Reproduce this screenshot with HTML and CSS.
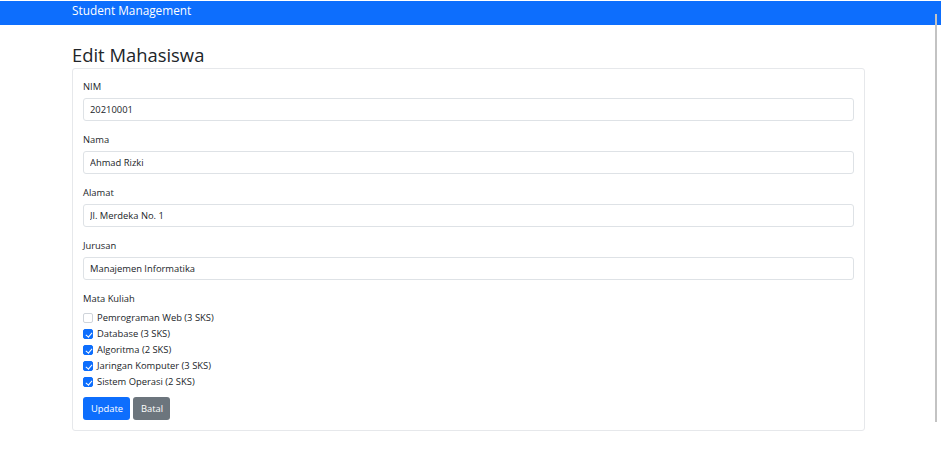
FILE: index.html
```html
<!DOCTYPE html>
<html lang="id">
<head>
<meta charset="utf-8">
<title>Edit Mahasiswa</title>
<link rel="stylesheet" href="styles.css">
</head>
<body>
<nav class="navbar"><div class="container"><span class="brand">Student Management</span></div></nav>
<main class="container">
  <h1 class="title">Edit Mahasiswa</h1>
  <form class="card">
    <div class="group">
      <label class="label">NIM</label>
      <input class="input" type="text" value="20210001">
    </div>
    <div class="group">
      <label class="label">Nama</label>
      <input class="input" type="text" value="Ahmad Rizki">
    </div>
    <div class="group">
      <label class="label">Alamat</label>
      <input class="input" type="text" value="Jl. Merdeka No. 1">
    </div>
    <div class="group">
      <label class="label">Jurusan</label>
      <input class="input" type="text" value="Manajemen Informatika">
    </div>
    <div class="group">
      <label class="label">Mata Kuliah</label>
      <div class="checks">
        <label class="check"><span class="box"></span>Pemrograman Web (3 SKS)</label>
        <label class="check"><span class="box on"></span>Database (3 SKS)</label>
        <label class="check"><span class="box on"></span>Algoritma (2 SKS)</label>
        <label class="check"><span class="box on"></span>Jaringan Komputer (3 SKS)</label>
        <label class="check"><span class="box on"></span>Sistem Operasi (2 SKS)</label>
      </div>
    </div>
    <div class="actions">
      <button type="button" class="btn btn-primary">Update</button>
      <button type="button" class="btn btn-secondary">Batal</button>
    </div>
  </form>
</main>
<div class="scrollbar"></div>
</body>
</html>
```
FILE: styles.css
```css
* { box-sizing: border-box; }
html, body { margin: 0; padding: 0; background: #fff; }
body {
  font-family: "Open Sans", "Noto Sans", "Liberation Sans", sans-serif;
  color: #212529;
  font-size: 9.4px;
  position: relative;
  min-height: 454px;
}
.container { margin-left: 72px; width: 793px; }
.navbar {
  margin-top: 1px;
  height: 24px;
  background: #0d6efd;
  display: flex;
  align-items: center;
}
.brand { color: #fff; font-size: 11.8px; line-height: 16px; position: relative; top: -3px; }
.title {
  margin: 16px 0 0;
  font-size: 18.4px;
  font-weight: 400;
  line-height: 27px;
  color: #212529;
}
.card {
  border: 1px solid #e6e8eb;
  border-radius: 3px;
  padding: 10px 10px 10px 10px;
  margin: 0;
}
.group { margin-bottom: 11px; display: flex; flex-direction: column; }
.label { line-height: 15px; margin-bottom: 4px; }
.input {
  height: 23px;
  border: 1px solid #dee2e6;
  border-radius: 3px;
  padding: 0 6px;
  font: inherit;
  color: #212529;
  width: 100%;
  outline: none;
}
.checks { display: flex; flex-direction: column; margin-top: 0; }
.check { display: flex; align-items: center; line-height: 16px; height: 16px; }
.box {
  width: 10px; height: 10px;
  border: 1px solid #cfd4da;
  border-radius: 2px;
  margin-right: 4px;
  background: #fff;
  position: relative;
}
.box.on { background: #0d6efd; border-color: #0d6efd; }
.box.on::after {
  content: "";
  position: absolute;
  left: 2.6px; top: 0.6px;
  width: 2.5px; height: 5px;
  border: solid #fff;
  border-width: 0 1.3px 1.3px 0;
  transform: rotate(40deg);
}
.actions { display: flex; gap: 3px; margin-top: -4px; }
.btn {
  height: 23px;
  border: 1px solid transparent;
  border-radius: 3px;
  font: inherit;
  color: #fff;
  padding: 0 7px;
  line-height: 21px;
}
.btn-primary { background: #0d6efd; width: 47px; }
.btn-secondary { background: #6c757d; width: 37px; }
.scrollbar {
  position: absolute;
  left: 935px; top: 14px;
  width: 2px; height: 408px;
  background: #c3c3c3;
}
```
